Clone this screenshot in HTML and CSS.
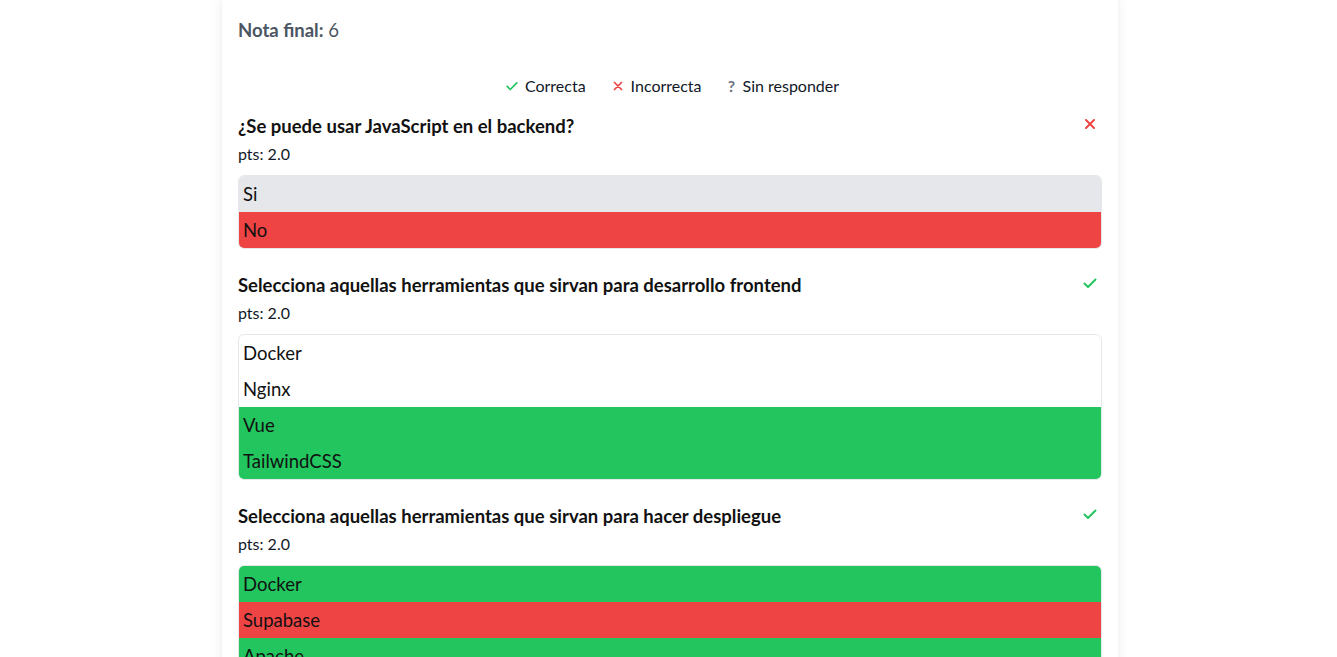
FILE: index.html
```html
<!DOCTYPE html>
<html lang="es">
<head>
<meta charset="utf-8">
<title>Resultado</title>
<link rel="stylesheet" href="styles.css">
</head>
<body>
<main class="card">
  <p class="grade"><strong>Nota final:</strong> 6</p>

  <div class="legend">
    <span class="legend-item"><svg class="ico ok" viewBox="0 0 16 16"><path d="M2.5 8.5l3.5 3.5 7.5-7.5"/></svg>Correcta</span>
    <span class="legend-item"><svg class="ico bad" viewBox="0 0 16 16"><path d="M4 4l8 8M12 4l-8 8"/></svg>Incorrecta</span>
    <span class="legend-item"><span class="q">?</span>Sin responder</span>
  </div>

  <section class="question">
    <div class="q-head">
      <h2 class="q-title">¿Se puede usar JavaScript en el backend?</h2>
      <svg class="status bad" viewBox="0 0 16 16"><path d="M4 4l8 8M12 4l-8 8"/></svg>
    </div>
    <p class="pts">pts: 2.0</p>
    <ul class="options">
      <li class="opt neutral">Si</li>
      <li class="opt wrong">No</li>
    </ul>
  </section>

  <section class="question">
    <div class="q-head">
      <h2 class="q-title">Selecciona aquellas herramientas que sirvan para desarrollo frontend</h2>
      <svg class="status ok" viewBox="0 0 16 16"><path d="M2.5 8.5l3.5 3.5 7.5-7.5"/></svg>
    </div>
    <p class="pts">pts: 2.0</p>
    <ul class="options">
      <li class="opt">Docker</li>
      <li class="opt">Nginx</li>
      <li class="opt right">Vue</li>
      <li class="opt right">TailwindCSS</li>
    </ul>
  </section>

  <section class="question">
    <div class="q-head">
      <h2 class="q-title">Selecciona aquellas herramientas que sirvan para hacer despliegue</h2>
      <svg class="status ok" viewBox="0 0 16 16"><path d="M2.5 8.5l3.5 3.5 7.5-7.5"/></svg>
    </div>
    <p class="pts">pts: 2.0</p>
    <ul class="options">
      <li class="opt right">Docker</li>
      <li class="opt wrong">Supabase</li>
      <li class="opt right">Apache</li>
      <li class="opt right">Nginx</li>
    </ul>
  </section>
</main>
</body>
</html>
```

FILE: styles.css
```css
* { box-sizing: border-box; }
html, body { margin: 0; padding: 0; background: #ffffff; }
body {
  font-family: Lato, "Open Sans", sans-serif;
  color: #111827;
}
.card {
  width: 896px;
  margin: -8px 0 0 calc(50% - 446.5px);
  padding: 24px 16px 40px;
  background: #fff;
  border-radius: 8px;
  box-shadow: 0 4px 14px rgba(0,0,0,0.07), 0 1px 3px rgba(0,0,0,0.04);
}
.grade {
  margin: 0;
  font-size: 18.5px;
  line-height: 28px;
  color: #4b5563;
}
.grade strong { font-weight: 700; }
.legend {
  display: flex;
  justify-content: center;
  gap: 25px;
  margin-top: 30px;
  padding-left: 4px;
  font-size: 16px;
  line-height: 24px;
  color: #111827;
}
.legend-item { display: flex; align-items: center; gap: 6px; }
.ico { width: 14px; height: 14px; fill: none; stroke-width: 2; stroke-linecap: round; stroke-linejoin: round; }
.ok { stroke: #22c55e; }
.bad { stroke: #ef4444; }
.q { color: #6b7280; font-weight: 700; width: 10px; text-align: center; }
.question { margin-top: 14px; }
.question + .question { margin-top: 22px; }
.q-head { display: flex; justify-content: space-between; align-items: flex-start; }
.q-title {
  margin: 0;
  font-size: 18.5px;
  line-height: 28px;
  font-weight: 700;
  color: #111;
}
.status { width: 16px; height: 16px; margin: 4px 4px 0 0; fill: none; stroke-width: 2; stroke-linecap: round; stroke-linejoin: round; flex: none; }
.pts {
  margin: 2px 0 0;
  font-size: 16px;
  line-height: 24px;
}
.options {
  list-style: none;
  margin: 9px 0 0;
  padding: 0;
  border: 1px solid #e5e7eb;
  border-radius: 6px;
  overflow: hidden;
}
.opt {
  height: 36px;
  line-height: 36px;
  padding: 0 4px;
  font-size: 18.5px;
  color: #111;
}
.neutral { background: #e5e7eb; }
.wrong { background: #ef4444; }
.right { background: #22c55e; }
```
